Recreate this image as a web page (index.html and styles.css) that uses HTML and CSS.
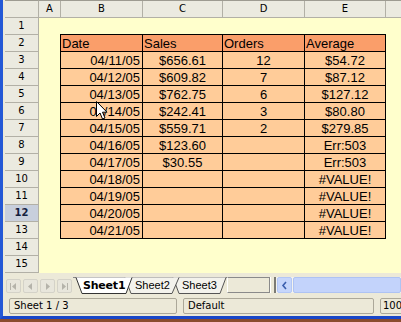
FILE: index.html
```html
<!doctype html>
<html>

<head>
	<link rel="stylesheet" href="styles.css">
</head>

<body>
	<div class="frame">
		<div class="sheet">
			<div class="corner"></div>
			<div class="colheads">
				<div class="ch col-a">A</div>
				<div class="ch col-b">B</div>
				<div class="ch col-c">C</div>
				<div class="ch col-d">D</div>
				<div class="ch col-e">E</div>
				<div class="ch col-rest"></div>
			</div>
			<div class="rowheads">
				<div class="rh">1</div>
				<div class="rh">2</div>
				<div class="rh">3</div>
				<div class="rh">4</div>
				<div class="rh">5</div>
				<div class="rh">6</div>
				<div class="rh">7</div>
				<div class="rh">8</div>
				<div class="rh">9</div>
				<div class="rh">10</div>
				<div class="rh">11</div>
				<div class="rh sel">12</div>
				<div class="rh">13</div>
				<div class="rh">14</div>
				<div class="rh">15</div>
			</div>
			<div class="cells">
				<table class="data">
					<colgroup>
						<col class="w-b">
						<col class="w-c">
						<col class="w-d">
						<col class="w-e">
					</colgroup>
					<tr class="head">
						<td>Date</td>
						<td>Sales</td>
						<td>Orders</td>
						<td>Average</td>
					</tr>
					<tr>
						<td class="r">04/11/05</td>
						<td>$656.61</td>
						<td>12</td>
						<td>$54.72</td>
					</tr>
					<tr>
						<td class="r">04/12/05</td>
						<td>$609.82</td>
						<td>7</td>
						<td>$87.12</td>
					</tr>
					<tr>
						<td class="r">04/13/05</td>
						<td>$762.75</td>
						<td>6</td>
						<td>$127.12</td>
					</tr>
					<tr>
						<td class="r">04/14/05</td>
						<td>$242.41</td>
						<td>3</td>
						<td>$80.80</td>
					</tr>
					<tr>
						<td class="r">04/15/05</td>
						<td>$559.71</td>
						<td>2</td>
						<td>$279.85</td>
					</tr>
					<tr>
						<td class="r">04/16/05</td>
						<td>$123.60</td>
						<td></td>
						<td>Err:503</td>
					</tr>
					<tr>
						<td class="r">04/17/05</td>
						<td>$30.55</td>
						<td></td>
						<td>Err:503</td>
					</tr>
					<tr>
						<td class="r">04/18/05</td>
						<td></td>
						<td></td>
						<td>#VALUE!</td>
					</tr>
					<tr>
						<td class="r">04/19/05</td>
						<td></td>
						<td></td>
						<td>#VALUE!</td>
					</tr>
					<tr>
						<td class="r">04/20/05</td>
						<td></td>
						<td></td>
						<td>#VALUE!</td>
					</tr>
					<tr>
						<td class="r">04/21/05</td>
						<td></td>
						<td></td>
						<td>#VALUE!</td>
					</tr>
				</table>
				<svg class="cursor" width="13" height="20" viewBox="0 0 13 20">
					<path d="M0.5 0.5 L0.5 15.5 L4 12 L6.5 18 L9 17 L6.5 11.2 L11 11.2 Z" fill="#fff" stroke="#000" stroke-width="1" />
				</svg>
			</div>
		</div>

		<div class="tabbar">
			<div class="nav">
				<div class="navbtn">
					<svg width="9" height="9" viewBox="0 0 9 9"><rect x="1" y="1" width="1" height="7" fill="#b5b3aa" /><path d="M7 1 L3 4.5 L7 8 Z" fill="#b5b3aa" /></svg>
				</div>
				<div class="navbtn">
					<svg width="9" height="9" viewBox="0 0 9 9"><path d="M6 1 L2 4.5 L6 8 Z" fill="#b5b3aa" /></svg>
				</div>
				<div class="navbtn">
					<svg width="9" height="9" viewBox="0 0 9 9"><path d="M3 1 L7 4.5 L3 8 Z" fill="#b5b3aa" /></svg>
				</div>
				<div class="navbtn">
					<svg width="9" height="9" viewBox="0 0 9 9"><path d="M2 1 L6 4.5 L2 8 Z" fill="#b5b3aa" /><rect x="7" y="1" width="1" height="7" fill="#b5b3aa" /></svg>
				</div>
			</div>
			<div class="tabs">
				<svg class="tabshapes" width="154" height="17" viewBox="0 0 154 17">
					<path d="M100 0.5 L106 16.5 L147 16.5 L153 0.5" fill="#f3f2ec" stroke="#555" />
					<path d="M52 0.5 L58 16.5 L99 16.5 L106 0.5" fill="#f3f2ec" stroke="#555" />
					<path d="M3 0.5 L9 16.5 L53 16.5 L59 0.5 Z" fill="#fff" stroke="none" />
					<path d="M3 0.5 L9 16.5 L53 16.5 L59 0.5" fill="none" stroke="#333" />
				</svg>
				<span class="tab active">Sheet1</span>
				<span class="tab t2">Sheet2</span>
				<span class="tab t3">Sheet3</span>
			</div>
			<div class="blank"></div>
			<div class="splitter"></div>
			<div class="hscroll">
				<div class="leftbtn">
					<svg width="7" height="9" viewBox="0 0 7 9"><path d="M5 1 L2 4.5 L5 8" fill="none" stroke="#3b5fae" stroke-width="1.6" /></svg>
				</div>
				<div class="track"></div>
			</div>
		</div>

		<div class="status">
			<div class="box box-sheet">Sheet 1 / 3</div>
			<div class="box box-style">Default</div>
			<div class="box box-zoom">100</div>
		</div>
	</div>
</body>

</html>
```

FILE: styles.css
```css
body {
	margin: 0;
	background: #8a4b2e;
	overflow: hidden;
}

.frame {
	width: 398px;
	height: 316px;
	border-left: 3px solid #2458d6;
	border-bottom: 3px solid #1947c8;
	background: #ece9d8;
	display: flex;
	flex-direction: column;
	overflow: hidden;
}

/* spreadsheet area */
.sheet {
	display: grid;
	grid-template-columns: 34px 1fr;
	grid-template-rows: 18px 255px;
	padding-left: 2px;
	background: #ece9d8;
	font-family: "DejaVu Sans", sans-serif;
	font-size: 10px;
	color: #000;
}

.corner {
	background: #ebeae0;
	border-top: 1px solid #9d9b91;
	border-right: 1px solid #b2b0a6;
	border-bottom: 1px solid #b2b0a6;
	box-sizing: border-box;
}

.colheads {
	display: flex;
	border-top: 1px solid #9d9b91;
	border-bottom: 1px solid #b2b0a6;
	background: #ebeae0;
}

.ch {
	box-sizing: border-box;
	border-right: 1px solid #b2b0a6;
	text-align: center;
	line-height: 16px;
	flex: none;
}

.col-a { width: 22px; }
.col-b { width: 82px; }
.col-c { width: 80px; }
.col-d { width: 82px; }
.col-e { width: 81px; }
.col-rest { flex: 1; border-right: none; }

.rowheads {
	display: flex;
	flex-direction: column;
}

.rh {
	height: 17px;
	box-sizing: border-box;
	background: #ebeae0;
	border-right: 1px solid #b2b0a6;
	border-bottom: 1px solid #b2b0a6;
	text-align: center;
	line-height: 16px;
}

.rh.sel {
	background: #c8cfdc;
	font-weight: bold;
	color: #14213f;
}

.cells {
	position: relative;
	background: #ffffcc;
	padding: 16px 0 0 21px;
}

table.data {
	border-collapse: separate;
	border-spacing: 0;
	table-layout: fixed;
	width: 326px;
	border-left: 1px solid #000;
	border-top: 1px solid #000;
	font-family: "Liberation Sans", Arial, sans-serif;
	font-size: 13px;
}

.w-b { width: 82px; }
.w-c { width: 80px; }
.w-d { width: 82px; }
.w-e { width: 81px; }

table.data td {
	height: 17px;
	box-sizing: border-box;
	padding: 0 2px;
	border-right: 1px solid #000;
	border-bottom: 1px solid #000;
	background: #ffcc99;
	text-align: center;
	line-height: 15px;
	white-space: nowrap;
	overflow: hidden;
}

table.data td.r {
	text-align: right;
}

table.data tr.head td {
	background: #fa9e6a;
	text-align: left;
	padding-left: 1px;
}

.cursor {
	position: absolute;
	left: 57px;
	top: 83px;
}

/* sheet tabs row */
.tabbar {
	height: 23px;
	display: flex;
	align-items: flex-start;
	padding-top: 4px;
	box-sizing: border-box;
	font-family: "Liberation Sans", Arial, sans-serif;
	font-size: 11px;
}

.nav {
	display: flex;
	gap: 2px;
	padding: 2px 0 0 3px;
}

.navbtn {
	width: 15px;
	height: 14px;
	box-sizing: border-box;
	border: 1px solid #d4d2c8;
	border-radius: 2px;
	background: #e8e6dc;
	display: flex;
	align-items: center;
	justify-content: center;
}

.tabs {
	position: relative;
	width: 154px;
	height: 17px;
	display: flex;
	border-top: 1px solid #8a8a8a;
	box-sizing: border-box;
	margin-left: 1px;
}

.tabshapes {
	position: absolute;
	left: 0;
	top: -1px;
}

.tab {
	position: relative;
	line-height: 15px;
	flex: none;
}

.tab.active {
	font-family: "DejaVu Sans", sans-serif;
	font-weight: bold;
	font-size: 11px;
	width: 62px;
	padding-left: 10px;
	box-sizing: border-box;
	letter-spacing: -0.2px;
}

.tab.t2 {
	width: 47px;
}

.tab.t3 {
	width: 45px;
}

.blank {
	width: 43px;
	height: 16px;
	box-sizing: border-box;
	border: 1px solid #8a8a8a;
	border-left-color: #fff;
	background: #ece9d8;
}

.splitter {
	width: 6px;
	height: 16px;
	box-sizing: border-box;
	border-left: 1px solid #fff;
	border-right: 2px solid #7c7b74;
	background: #ece9d8;
}

.hscroll {
	flex: 1;
	display: flex;
	height: 16px;
	gap: 1px;
	padding-left: 1px;
	background: #f4f3ee;
}

.leftbtn {
	width: 15px;
	height: 16px;
	box-sizing: border-box;
	background: #c6d6fb;
	border: 1px solid #b3c7f5;
	border-radius: 2px;
	display: flex;
	align-items: center;
	justify-content: center;
}

.track {
	flex: 1;
	background: #c3d3fb;
	border: 1px solid #aec3f3;
	border-radius: 2px;
}

/* status bar */
.status {
	height: 20px;
	display: flex;
	align-items: center;
	padding-left: 6px;
	gap: 6px;
	font-family: "DejaVu Sans", sans-serif;
	font-size: 10px;
}

.box {
	height: 16px;
	box-sizing: border-box;
	border: 1px solid #aca899;
	border-radius: 2px;
	line-height: 14px;
	padding-left: 4px;
	white-space: nowrap;
	flex: none;
}

.box-sheet { width: 168px; }
.box-style { width: 191px; }
.box-zoom { width: 40px; padding-left: 2px; }
```
